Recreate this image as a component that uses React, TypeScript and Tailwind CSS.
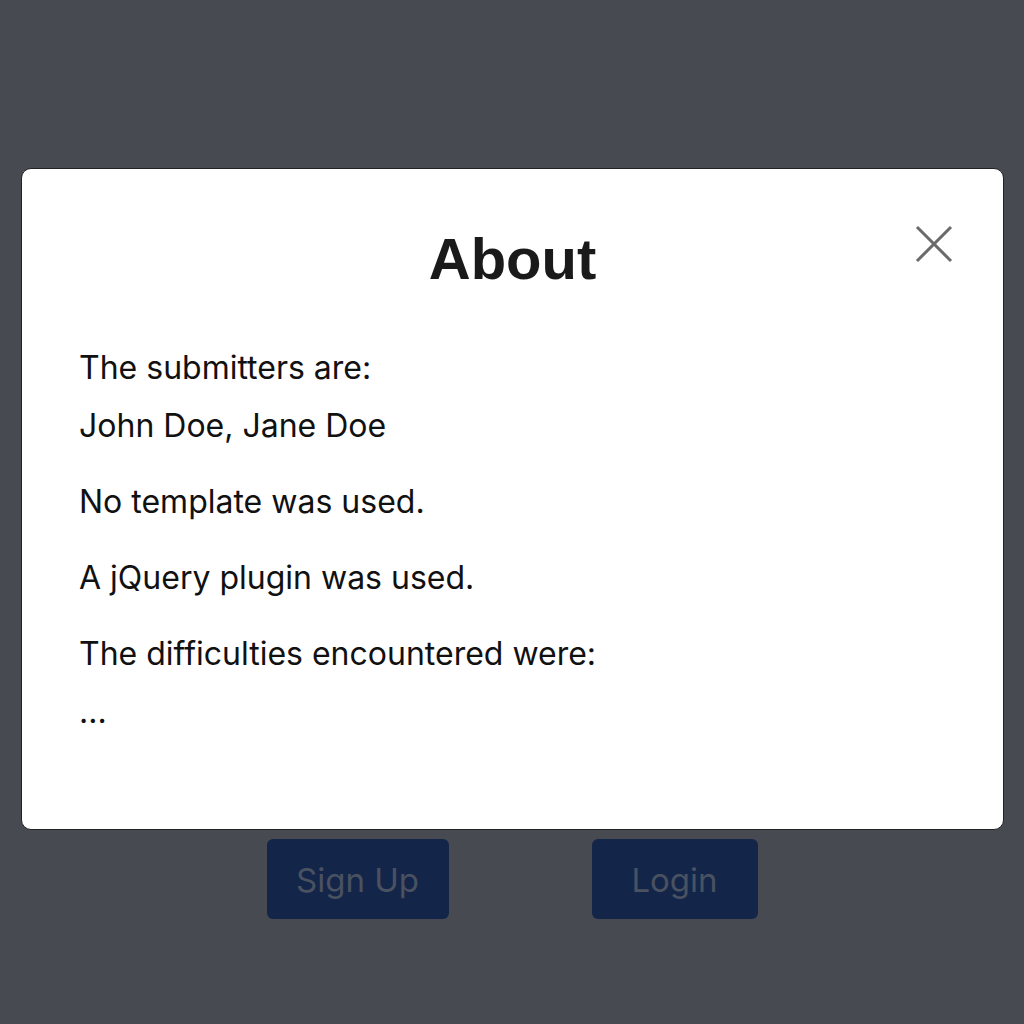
export default function App() {
  return (
    <div className="relative h-[1024px] w-[1024px] overflow-hidden bg-[#474a51] font-['Inter','Liberation_Sans',sans-serif]">
      {/* page behind the modal */}
      <div className="flex justify-center gap-[143px] pt-[839px]">
        <button className="h-[80px] w-[182px] rounded-md bg-[#13264a] pt-[4px] text-[33px] text-[#4a5161]">Sign Up</button>
        <button className="h-[80px] w-[166px] rounded-md bg-[#13264a] pt-[4px] text-[33px] text-[#4a5161]">Login</button>
      </div>

      {/* modal */}
      <div className="absolute left-[21px] top-[168px] h-[662px] w-[983px] rounded-[10px] border border-[#222] bg-white">
        <div className="relative pt-[50px] text-center">
          <h2 className="font-['Liberation_Sans',Arial,sans-serif] text-[58px] font-bold leading-[80px] text-[#1a1a1a]">About</h2>
          <button className="absolute right-[50px] top-[56px] text-[#6b6b6b]">
            <svg width="38" height="38" viewBox="0 0 38 38" fill="none" stroke="currentColor" strokeWidth="3">
              <path d="M2 2L36 36M36 2L2 36" />
            </svg>
          </button>
        </div>
        <div className="px-[57px] pt-[40px] text-[32px] leading-[58px] text-[#111]">
          <p>The submitters are:</p>
          <p>John Doe, Jane Doe</p>
          <p className="mt-[18px]">No template was used.</p>
          <p className="mt-[18px]">A jQuery plugin was used.</p>
          <p className="mt-[18px]">The difficulties encountered were:</p>
          <p>...</p>
        </div>
      </div>
    </div>
  );
}
